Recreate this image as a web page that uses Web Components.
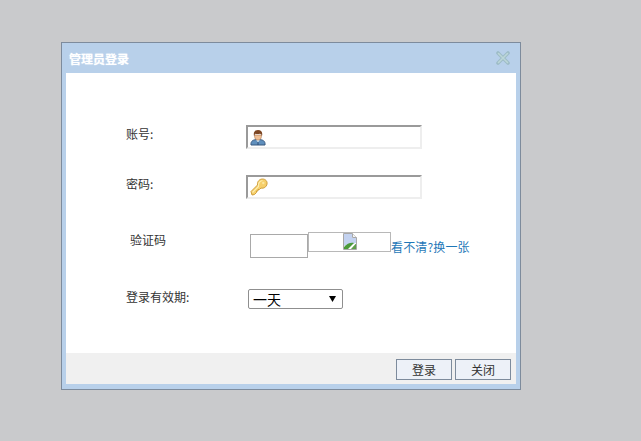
<!DOCTYPE html>
<html>
<head>
<meta charset="utf-8">
<title>管理员登录</title>
<style>
  html, body { margin: 0; padding: 0; background: #c9cacc; }
  body { font-family: "Liberation Sans", "Noto Sans CJK SC", sans-serif; }
</style>
</head>
<body>
<login-page>
  <login-dialog heading="管理员登录">
    <form-row label="账号:" top="52" label-offset="0">
      <icon-input icon="user"></icon-input>
    </form-row>
    <form-row label="密码:" top="26" label-offset="0">
      <icon-input icon="key"></icon-input>
    </form-row>
    <form-row label="验证码" top="35" label-offset="-3" label-indent="4">
      <captcha-field></captcha-field>
    </form-row>
    <form-row label="登录有效期:" top="31" label-offset="-1">
      <period-select></period-select>
    </form-row>
    <dialog-button slot="footer">登录</dialog-button>
    <dialog-button slot="footer">关闭</dialog-button>
  </login-dialog>
</login-page>

<script>
const define = (name, html, setup) => {
  const template = document.createElement('template');
  template.innerHTML = html;
  customElements.define(name, class extends HTMLElement {
    constructor() {
      super();
      this.attachShadow({ mode: 'open' });
      this.shadowRoot.appendChild(template.content.cloneNode(true));
    }
    connectedCallback() {
      if (setup) setup(this, this.shadowRoot);
    }
  });
};

define('login-page', `
  <style>
    :host { display: block; width: 641px; height: 441px; padding: 42px 0 0 61px; box-sizing: border-box; overflow: hidden; }
  </style>
  <slot></slot>
`);

define('login-dialog', `
  <style>
    :host {
      display: flex; flex-direction: column; width: 460px; height: 348px; box-sizing: border-box;
      background: #b8d0ea; border: 1px solid #7d8b9c; padding: 0 4px 5px 4px;
    }
    header { height: 30px; display: flex; align-items: center; justify-content: space-between; padding: 0 3px; flex: none; }
    h1 { margin: 0; font: bold 12px "Noto Sans CJK SC", sans-serif; color: #fff; text-shadow: 0 0 1px #e8f0fa; }
    svg { display: block; margin-right: 2px; }
    main { flex: 1; background: #fff; padding-left: 60px; min-height: 0; }
    footer { flex: none; height: 31px; box-sizing: border-box; background: #f0f0f0; display: flex; justify-content: flex-end; align-items: flex-start; gap: 3px; padding: 6px 5px 0 0; }
  </style>
  <header>
    <h1></h1>
    <svg width="16" height="16" viewBox="0 0 16 16">
      <path d="M3 3 L13 13 M13 3 L3 13" stroke="#9dbcc6" stroke-width="3.600" stroke-linecap="round"/>
      <path d="M3.500 3.500 L12.500 12.500 M12.500 3.500 L3.500 12.500" stroke="#bcd6d8" stroke-width="1.600" stroke-linecap="round"/>
    </svg>
  </header>
  <main><slot></slot></main>
  <footer><slot name="footer"></slot></footer>
`, (host, root) => {
  root.querySelector('h1').textContent = host.getAttribute('heading');
});

define('form-row', `
  <style>
    :host { display: flex; align-items: flex-start; font: 12px "Noto Sans CJK SC", sans-serif; color: #333; }
    label { width: 120px; flex: none; box-sizing: border-box; line-height: 18px; }
  </style>
  <label></label>
  <slot></slot>
`, (host, root) => {
  const label = root.querySelector('label');
  label.textContent = host.getAttribute('label');
  host.style.marginTop = host.getAttribute('top') + 'px';
  label.style.marginTop = host.getAttribute('label-offset') + 'px';
  label.style.paddingLeft = (host.getAttribute('label-indent') || 0) + 'px';
});

const icons = {
  user: `<svg width="16" height="17" viewBox="0 0 16 17">
    <path d="M1 16 C.5 12 3 10.500 8 10.500 C13 10.500 15.500 12 15 16 Z" fill="#5f8fbd" stroke="#39597f" stroke-width="1"/>
    <path d="M6 10.500 L8 13.500 L10 10.500 Z" fill="#d8e6f0"/>
    <path d="M7.500 13 H8.500 V16 H7.500 Z" fill="#2f4f78"/>
    <path d="M4.500 6 C4.500 10 6 11 8 11 C10 11 11.500 10 11.500 6 Z" fill="#f0bf95" stroke="#a8734c" stroke-width=".6"/>
    <path d="M4 7 C3 2.500 5.500 1 8 1 C11 1 13 2.800 12 7 C11.500 5.500 10.800 5 10 4.800 C8.500 5.200 6.500 5 5.500 4.800 C4.800 5.300 4.300 6 4 7 Z" fill="#7c4522"/>
  </svg>`,
  key: `<svg width="18" height="18" viewBox="0 0 18 18">
    <path d="M1 13.500 L7.500 7 C7 3.500 9.500 1 12.500 1 C15.500 1 17.500 3.200 17 6 C16.600 9 13.500 10.800 11 10 L9.500 11.500 L8 11.500 L8 13 L6.500 13 L6.500 14.500 L4.500 16.500 L2 17 Z" fill="#f6cf6a" stroke="#cf9f3e" stroke-width="1"/>
    <path d="M2.500 14.500 L8.500 8.500 C8.200 5 10 3 12.500 2.500" fill="none" stroke="#fdeeb0" stroke-width="1.200"/>
    <circle cx="13.300" cy="5" r="1.200" fill="#fbe7a0"/>
  </svg>`
};

define('icon-input', `
  <style>
    :host {
      display: flex; align-items: center; width: 176px; height: 24px; box-sizing: border-box;
      border: 2px solid #eeeeee; border-top-color: #9a9a9a; border-left-color: #9a9a9a; background: #fff;
    }
    span { display: block; margin-left: 2px; }
    svg { display: block; }
    input { flex: 1; min-width: 0; border: 0; padding: 0; background: transparent; outline: 0; }
  </style>
  <span></span>
  <input type="text">
`, (host, root) => {
  root.querySelector('span').innerHTML = icons[host.getAttribute('icon')];
});

define('captcha-field', `
  <style>
    :host { display: flex; align-items: flex-start; margin-left: 4px; }
    input { display: block; width: 58px; height: 24px; box-sizing: border-box; border: 1px solid #a9a9a9; padding: 0; background: #fff; outline: 0; }
    div { width: 83px; height: 20px; box-sizing: border-box; border: 1px solid #b8b8b8; margin-top: -2px; display: flex; justify-content: center; }
    svg { display: block; margin-left: 1px; }
    a { font: 12px "Noto Sans CJK SC", sans-serif; letter-spacing: .15px; color: #1f78b8; text-decoration: none; line-height: 18px; margin-top: 4px; white-space: nowrap; }
  </style>
  <input type="text">
  <div>
    <svg width="16" height="17" viewBox="0 0 16 17">
      <path d="M1.500 .5 H10.500 L14.500 4.500 V16.500 H1.500 Z" fill="#fff" stroke="#a8a8a8"/>
      <path d="M2 1 H10 V5 H14 V10 L2 13 Z" fill="#c3d2f0"/>
      <path d="M2 16 V14 C5 10.500 9 9 12 10 L6 16 Z" fill="#4b9a3a"/>
      <path d="M10.500 .5 V4.500 H14.500" fill="#f4f4f4" stroke="#a8a8a8"/>
      <path d="M13.500 11 L9 16 H14 V11 Z" fill="#5f9e4c"/>
    </svg>
  </div>
  <a href="#">看不清?换一张</a>
`);

define('period-select', `
  <style>
    :host { display: block; margin-left: 2px; }
    div {
      display: flex; align-items: center; justify-content: space-between; width: 95px; height: 20px; box-sizing: border-box;
      border: 1px solid #8f8f8f; border-radius: 2px; background: #fff; padding: 0 6px 0 4px;
      font: 14px "Noto Sans CJK SC", sans-serif; color: #000;
    }
    svg { display: block; }
  </style>
  <div>一天<svg width="7" height="6" viewBox="0 0 7 6"><path d="M0 0 H7 L3.500 6 Z" fill="#000"/></svg></div>
`);

define('dialog-button', `
  <style>
    :host {
      display: block; width: 56px; height: 21px; box-sizing: border-box; border: 1px solid #7d8b9c;
      background: #edf1f8; color: #333; font: 12px/19px "Noto Sans CJK SC", sans-serif; text-align: center;
    }
  </style>
  <slot></slot>
`);
</script>
</body>
</html>
